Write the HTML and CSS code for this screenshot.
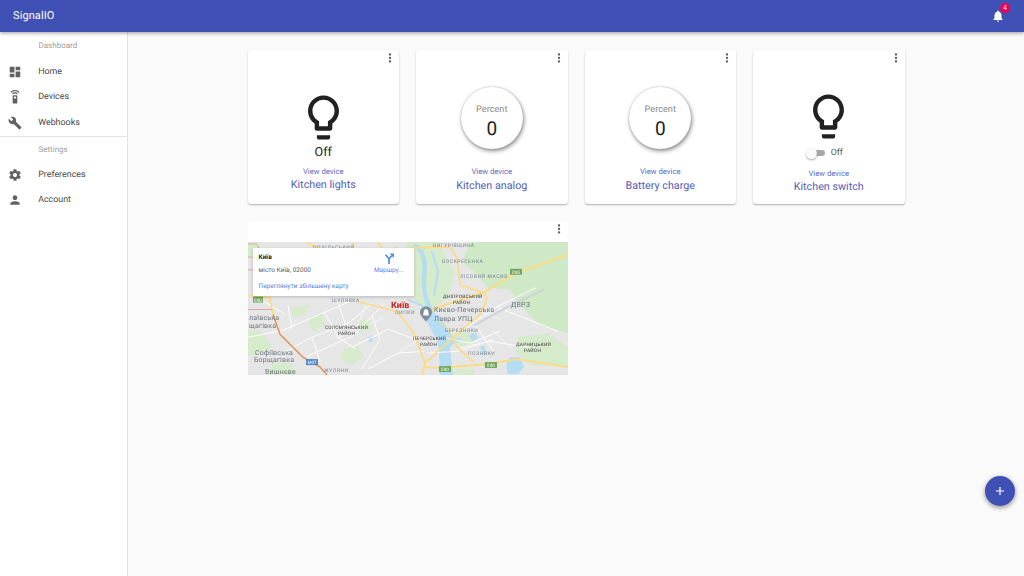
FILE: index.html
```html
<!DOCTYPE html>
<html lang="uk">
<head>
<meta charset="utf-8">
<title>SignalIO</title>
<link rel="stylesheet" href="styles.css">
</head>
<body>
<svg class="defs" aria-hidden="true">
  <symbol id="i-more" viewBox="0 0 24 24"><path d="M12 8c1.1 0 2-.9 2-2s-.9-2-2-2-2 .9-2 2 .9 2 2 2zm0 2c-1.1 0-2 .9-2 2s.9 2 2 2 2-.9 2-2-.9-2-2-2zm0 6c-1.1 0-2 .9-2 2s.9 2 2 2 2-.9 2-2-.9-2-2-2z"/></symbol>
  <symbol id="i-bulb" viewBox="0 0 24 24"><path d="M9 21c0 .55.45 1 1 1h4c.55 0 1-.45 1-1v-1H9v1zm3-19C8.14 2 5 5.14 5 9c0 2.38 1.19 4.47 3 5.74V17c0 .55.45 1 1 1h6c.55 0 1-.45 1-1v-2.26c1.81-1.27 3-3.36 3-5.74 0-3.86-3.14-7-7-7zm2.85 11.1l-.85.6V16h-4v-2.3l-.85-.6C7.8 12.16 7 10.63 7 9c0-2.76 2.24-5 5-5s5 2.24 5 5c0 1.63-.8 3.16-2.15 4.1z"/></symbol>
</svg>

<header class="appbar">
  <span class="brand">SignalIO</span>
  <button class="bell" type="button">
    <svg class="bell-icon" viewBox="0 0 24 24"><path d="M12 22c1.1 0 2-.9 2-2h-4c0 1.1.89 2 2 2zm6-6v-5c0-3.07-1.64-5.64-4.5-6.32V4c0-.83-.67-1.5-1.5-1.5s-1.5.67-1.5 1.5v.68C7.63 5.36 6 7.92 6 11v5l-2 2v1h16v-1l-2-2z"/></svg>
    <span class="badge">4</span>
  </button>
</header>

<div class="shell">
  <nav class="sidebar">
    <div class="nav-label">Dashboard</div>
    <a class="nav-item"><svg class="nav-icon" viewBox="0 0 24 24"><path d="M3 13h8V3H3v10zm0 8h8v-6H3v6zm10 0h8V11h-8v10zm0-18v6h8V3h-8z"/></svg>Home</a>
    <a class="nav-item"><svg class="nav-icon" viewBox="0 0 24 24"><path d="M15 9H9c-.55 0-1 .45-1 1v12c0 .55.45 1 1 1h6c.55 0 1-.45 1-1V10c0-.55-.45-1-1-1zm-3 6c-1.1 0-2-.9-2-2s.9-2 2-2 2 .9 2 2-.9 2-2 2zM7.05 6.05l1.41 1.41C9.37 6.56 10.62 6 12 6s2.63.56 3.54 1.46l1.41-1.41C15.68 4.78 13.93 4 12 4s-3.68.78-4.95 2.05zM12 0C8.96 0 6.21 1.23 4.22 3.22l1.41 1.41C7.26 3.01 9.51 2 12 2s4.74 1.01 6.36 2.64l1.41-1.41C17.79 1.23 15.04 0 12 0z"/></svg>Devices</a>
    <a class="nav-item"><svg class="nav-icon" viewBox="0 0 24 24"><path d="M22.7 19l-9.1-9.1c.9-2.3.4-5-1.5-6.9-2-2-5-2.4-7.4-1.3L9 6 6 9 1.6 4.7C.4 7.1.9 10.1 2.9 12.1c1.9 1.9 4.6 2.4 6.9 1.5l9.1 9.1c.4.4 1 .4 1.4 0l2.3-2.3c.5-.4.5-1.1.1-1.4z"/></svg>Webhooks</a>
    <div class="nav-divider"></div>
    <div class="nav-label nav-label-tight">Settings</div>
    <a class="nav-item"><svg class="nav-icon" viewBox="0 0 24 24"><path d="M19.43 12.98c.04-.32.07-.64.07-.98s-.03-.66-.07-.98l2.11-1.65c.19-.15.24-.42.12-.64l-2-3.46c-.12-.22-.39-.3-.61-.22l-2.49 1c-.52-.4-1.08-.73-1.69-.98l-.38-2.65C14.46 2.18 14.25 2 14 2h-4c-.25 0-.46.18-.49.42l-.38 2.65c-.61.25-1.17.59-1.69.98l-2.49-1c-.23-.09-.49 0-.61.22l-2 3.46c-.13.22-.07.49.12.64l2.11 1.65c-.04.32-.07.65-.07.98s.03.66.07.98l-2.11 1.65c-.19.15-.24.42-.12.64l2 3.46c.12.22.39.3.61.22l2.49-1c.52.4 1.08.73 1.69.98l.38 2.65c.03.24.24.42.49.42h4c.25 0 .46-.18.49-.42l.38-2.65c.61-.25 1.17-.59 1.69-.98l2.49 1c.23.09.49 0 .61-.22l2-3.46c.12-.22.07-.49-.12-.64l-2.11-1.65zM12 15.5c-1.93 0-3.5-1.57-3.5-3.5s1.57-3.5 3.5-3.5 3.5 1.57 3.5 3.5-1.57 3.5-3.5 3.5z"/></svg>Preferences</a>
    <a class="nav-item"><svg class="nav-icon" viewBox="0 0 24 24"><path d="M12 12c2.21 0 4-1.79 4-4s-1.79-4-4-4-4 1.79-4 4 1.79 4 4 4zm0 2c-2.67 0-8 1.34-8 4v2h16v-2c0-2.66-5.33-4-8-4z"/></svg>Account</a>
  </nav>

  <main class="main">
    <div class="grid">
      <article class="card">
        <svg class="more"><use href="#i-more"/></svg>
        <svg class="bulb"><use href="#i-bulb"/></svg>
        <div class="state">Off</div>
        <a class="view">View device</a>
        <a class="name">Kitchen lights</a>
      </article>

      <article class="card">
        <svg class="more"><use href="#i-more"/></svg>
        <div class="gauge"><span class="gauge-unit">Percent</span><span class="gauge-value">0</span></div>
        <a class="view">View device</a>
        <a class="name name-b">Kitchen analog</a>
      </article>

      <article class="card">
        <svg class="more"><use href="#i-more"/></svg>
        <div class="gauge"><span class="gauge-unit">Percent</span><span class="gauge-value">0</span></div>
        <a class="view">View device</a>
        <a class="name name-b">Battery charge</a>
      </article>

      <article class="card card-switch">
        <svg class="more"><use href="#i-more"/></svg>
        <svg class="bulb"><use href="#i-bulb"/></svg>
        <div class="switch-row"><span class="switch"><span class="thumb"></span></span><span class="switch-label">Off</span></div>
        <a class="view">View device</a>
        <a class="name">Kitchen switch</a>
      </article>

      <article class="card card-map">
        <svg class="more"><use href="#i-more"/></svg>
        <div class="map">
          <svg class="map-art" viewBox="0 0 320 134" preserveAspectRatio="none">
            <rect width="320" height="134" fill="#e6e6e6"/>
            <path fill="#cfe8c6" d="M222 0H320V92L292 84 270 62 262 48 240 46 226 30 214 20Z"/>
            <path fill="#d5ebcb" d="M270 96l30-4 20 14v20l-38-2-14-14zM0 0H12V12L0 16zM160 0h30l16 30-6 26-20 14-14-12-12-28zM205 92l16-2 6 10-14 6zM226 128h-18l-6 6h24zM96 108l14-3 6 10-12 10-12-8zM60 76l14-4 4 12-14 6zM110 78l10 0 3 10-12 3zM44 66l18-2-6 9-12 2zM0 90h14l10 16-18 8H0zM24 122h18l6 12H20z"/>
            <g fill="none" stroke="#b4dcf3" stroke-linecap="round">
              <path stroke-width="4.500" d="M168 4C176 10 178 20 176 35 175 50 178 62 188 78"/>
              <path stroke-width="2" d="M160 58 178 66 188 80M184 10 190 30 186 54"/>
            </g>
            <path fill="#b4dcf3" d="M183 72l8 2 8 12 6 10 10 2-10 5-3 3 3 28h-13l-1-26-2-10-5-8-5-10zM232 105l4-1 3 9-4 2zM262 116h10l4 10-6 7h-10l-2-8zM221 94l6-3 4 6-7 3zM120 96l4-1 1 5-4 1z"/>
            <g fill="none" stroke="#fff" stroke-width="1" stroke-opacity=".9">
              <path d="M32 90 102 60M38 110l26-14 36-14 24-20M64 96l8 24M76 70l14 26 18 12M58 116l48-22 30-32M104 106l36-18 28 10M124 74l8 24-18 30M86 50l12 34M40 64l4 24M16 60l20 12M0 96l30-6M204 96l44-30 40-20M196 96l26 6 30-12M250 66l60 24M226 82l22 32M180 112l30-2 36-12M240 100l40 6M120 128l30-16 26-2"/>
              <path stroke-width=".6" d="M118 64l-10 24-20 10M136 76l-24 12M48 78l-8 12M168 100l-16 10M208 108l24-6M232 70l20 8M244 88l18 18M216 50l-16 12"/>
            </g>
            <path fill="none" stroke="#cdd3da" stroke-width="2" d="M226 84l40-22 30-14"/>
            <g fill="none" stroke="#fbdc84" stroke-width="1.700" stroke-linecap="round" stroke-linejoin="round">
              <path stroke-width="2" d="M320 13 269 31 235 51 189 66 178 72"/>
              <path stroke-width="2" d="M174 134l2-8 16 1 47-4 30-5 51 8"/>
              <path d="M109 60 149 70 165 90 177 122 174 134"/>
              <path d="M165 6 202 5 209 16 212 43 235 51 239 56 232 73 205 96 209 106 225 120M177 122 205 96"/>
              <path d="M22 56 25 73M0 54 22 56M130 0l6 8M58 0l12 6M106 0l-2 6"/>
              <path stroke-width="1.200" d="M150 5l-20 5M205 96l-6-10-8-6"/>
            </g>
            <path fill="none" stroke="#e58f56" stroke-width="1.400" d="M25 73l7 20 23 23 17 10 7 8"/>
            <path fill="none" stroke="#e8a6a0" stroke-width="1" d="M0 68h24M0 2l8 0 6 8-4 6-10-1M0 28l6 0"/>
            <g class="label">
              <text x="65" y="7">ПОДІЛЬСЬКИЙ</text>
              <text x="185" y="5">ВИГУРІВЩИНА</text>
              <text x="194" y="21">ВОСКРЕСЕНКА</text>
              <text x="212" y="36">ЛІСОВИЙ МАСИВ</text>
              <text x="84" y="60">ШУЛЯВКА</text>
              <text x="197" y="91">БЕРЕЗНЯКИ</text>
              <text x="220" y="114">ПОЗНЯКИ</text>
              <text x="147" y="73">ЛИПКИ</text>
              <text x="76" y="131">ЖУЛЯНИ</text>
            </g>
            <g class="label-dark">
              <text x="77" y="88">СОЛОМ'ЯНСЬКИЙ</text><text x="90" y="94">РАЙОН</text>
              <text x="195" y="56">ДНІПРОВСЬКИЙ</text><text x="205" y="62">РАЙОН</text>
              <text x="165" y="99">ПЕЧЕРСЬКИЙ</text><text x="172" y="105">РАЙОН</text>
              <text x="268" y="105">ДАРНИЦЬКИЙ</text><text x="276" y="111">РАЙОН</text>
            </g>
            <g class="label-large">
              <text x="263" y="65">ДВРЗ</text>
              <text x="186" y="71">Києво-Печерська</text>
              <text x="186" y="80">Лавра УПЦ</text>
              <text x="7" y="114">Софіївська</text>
              <text x="6" y="121">Борщагівка</text>
              <text x="1" y="79">лаївська</text>
              <text x="1" y="87">щагівка</text>
              <text x="17" y="133">Вишнєве</text>
            </g>
            <text class="label-city" x="143" y="66">Київ</text>
            <path fill="#7a8b99" d="M178 65c-3.300 0-6 2.600-6 5.800 0 3.900 6 9.200 6 9.200s6-5.300 6-9.200c0-3.200-2.700-5.800-6-5.800z"/>
            <path fill="#fff" d="M175 74l1-5 2-2 2 2 1 5z"/>
            <g class="shield">
              <rect x="262" y="27" width="12" height="6" fill="#6fa85e"/><text x="268" y="32">E95</text>
              <rect x="191" y="125" width="12" height="6" fill="#6fa85e"/><text x="197" y="130">E40</text>
              <rect x="237" y="121" width="12" height="6" fill="#6fa85e"/><text x="243" y="126">E40</text>
              <rect x="58" y="118" width="12" height="6" fill="#4f87c9"/><text x="64" y="123">М07</text>
              <rect x="5" y="55" width="10" height="6" fill="#6fa85e"/><text x="10" y="60">E40</text>
            </g>
          </svg>
          <div class="popup">
            <div class="popup-main">
              <div class="popup-text">
                <div class="popup-title">Київ</div>
                <div class="popup-sub">місто Київ, 02000</div>
              </div>
              <div class="popup-route">
                <svg class="route-icon" viewBox="0 0 24 24"><path class="route-stroke" d="M5 3.500l7 8V22M12 11.500l6-6"/><path d="M13 1h9v9z"/></svg>
                <span>Маршру...</span>
              </div>
            </div>
            <a class="popup-link">Переглянути збільшену карту</a>
          </div>
        </div>
      </article>
    </div>
  </main>
</div>

<button class="fab" type="button">
  <svg class="fab-icon" viewBox="0 0 24 24"><path d="M19 13h-6v6h-2v-6H5v-2h6V5h2v6h6v2z"/></svg>
</button>
</body>
</html>
```
FILE: styles.css
```css
* { box-sizing: border-box; }
html, body { height: 100%; }
body {
  margin: 0;
  height: 576px;
  overflow: hidden;
  display: flex;
  flex-direction: column;
  font-family: Roboto, "Liberation Sans", sans-serif;
  text-rendering: geometricPrecision;
  background: #fafafa;
  color: #212121;
}
.defs { display: none; }

.appbar {
  position: relative;
  z-index: 2;
  flex: 0 0 32px;
  display: flex;
  align-items: center;
  justify-content: space-between;
  padding: 0 19px 2px 13px;
  background: #3f51b5;
  color: #fff;
  box-shadow: 0 1px 4px rgba(0,0,0,.4);
}
.brand { font-size: 11px; letter-spacing: .1px; }
.bell {
  position: relative;
  padding: 0;
  border: 0;
  background: none;
  width: 14px;
  height: 14px;
  margin-top: 2px;
}
.bell-icon { display: block; width: 14px; height: 14px; fill: #fff; }
.badge {
  position: absolute;
  top: -6px;
  right: -5px;
  width: 10px;
  height: 10px;
  border-radius: 50%;
  background: #f50057;
  color: #fff;
  font-size: 6.500px;
  line-height: 10px;
  text-align: center;
}

.shell { flex: 1; display: flex; min-height: 0; }
.sidebar {
  flex: 0 0 128px;
  padding-top: 1px;
  background: #fff;
  border-right: 1px solid #e4e4e4;
}
.nav-label {
  height: 26px;
  padding-left: 38.500px;
  font-size: 8px;
  line-height: 26px;
  color: #9e9e9e;
}
.nav-label-tight { height: 25px; line-height: 25px; }
.nav-item {
  height: 25.600px;
  display: flex;
  align-items: center;
  font-size: 8.900px;
  color: #4a4a4a;
}
.nav-icon {
  flex: 0 0 14px;
  width: 14px;
  height: 14px;
  margin: 0 16.200px 0 8px;
  fill: #616161;
}
.nav-divider { height: 1px; background: #e4e4e4; }

.main { flex: 1; padding-top: 18px; }
.grid {
  width: 657px;
  margin: 0 auto;
  display: grid;
  grid-template-columns: repeat(4, 1fr);
  grid-auto-rows: 154px;
  gap: 17px;
}
.card {
  position: relative;
  display: flex;
  flex-direction: column;
  align-items: center;
  justify-content: flex-end;
  padding-bottom: 12px;
  background: #fff;
  border-radius: 3px;
  box-shadow: 0 1px 2px rgba(0,0,0,.22), 0 1px 1px rgba(0,0,0,.1);
}
.more {
  position: absolute;
  top: 1px;
  right: 2px;
  width: 14px;
  height: 14px;
  fill: #616161;
  z-index: 1;
}
.bulb { width: 53px; height: 53px; fill: #212121; }
.state { margin: 1px 0 5px; font-size: 12.500px; line-height: 16px; }
.view { font-size: 7.700px; line-height: 11px; color: #5c6bc0; }
.name { margin-top: 1px; font-size: 10.750px; line-height: 14px; color: #5460b8; }
.name-b { margin: 2.500px 0 -1px; }

.gauge {
  width: 62px;
  height: 62px;
  margin-bottom: 17px;
  display: flex;
  flex-direction: column;
  align-items: center;
  border-radius: 50%;
  background: #fff;
  box-shadow: 1px 2px 4px rgba(0,0,0,.45), 0 0 2px rgba(0,0,0,.2);
}
.gauge-unit { margin-top: 17px; font-size: 9.200px; line-height: 12px; color: #8a8a8a; }
.gauge-value { margin-top: 2px; font-size: 19px; line-height: 22px; }

.card-switch { padding-bottom: 10px; }
.card-switch .bulb { margin-bottom: 4.500px; }
.switch-row { display: flex; align-items: center; height: 12px; margin-bottom: 9px; padding-right: 6px; }
.switch { position: relative; width: 16px; height: 6px; margin-right: 6px; border-radius: 3px; background: #a8a8a8; }
.thumb {
  position: absolute;
  left: -3px;
  top: -2.500px;
  width: 11px;
  height: 11px;
  border-radius: 50%;
  background: #fafafa;
  box-shadow: 0 1px 2px rgba(0,0,0,.35);
}
.switch-label { font-size: 8.800px; color: #555; }

.card-map {
  grid-column: span 2;
  padding: 21px 0 0;
  overflow: hidden;
  justify-content: flex-start;
  align-items: stretch;
  border-radius: 3px 3px 0 0;
  box-shadow: none;
}
.map { position: relative; height: 134px; overflow: hidden; }
.map-art { display: block; width: 100%; height: 100%; filter: blur(.45px); }
.label text { font: 5px Roboto, sans-serif; letter-spacing: .55px; fill: #7a8492; }
.label-dark text { font: 500 4.800px Roboto, sans-serif; letter-spacing: .2px; fill: #5c5c5c; }
.label-large text { font: 7px Roboto, sans-serif; letter-spacing: .2px; fill: #6a747c; }
.label-city { font: 700 9px Roboto, sans-serif; fill: #c5221f; }
.shield text { font: 4.500px Roboto, sans-serif; fill: #fff; text-anchor: middle; }

.popup {
  position: absolute;
  left: 5px;
  top: 6px;
  width: 161px;
  height: 48px;
  padding: 5px 6px 0;
  background: #fff;
  box-shadow: 0 1px 3px rgba(0,0,0,.2);
  display: flex;
  flex-direction: column;
  justify-content: space-between;
  font-size: 6.500px;
}
.popup-main { display: flex; justify-content: space-between; }
.popup-title { font-weight: 700; line-height: 9px; color: #222; }
.popup-sub { margin-top: 3.500px; line-height: 9px; color: #5b5b5b; }
.popup-route { display: flex; flex-direction: column; align-items: center; margin-right: 4px; color: #4f86e8; font-size: 6.500px; line-height: 8px; }
.route-icon { width: 12px; height: 12px; fill: #4f8fe0; margin-bottom: 1px; }
.route-stroke { fill: none; stroke: #4f8fe0; stroke-width: 3.500; }
.popup-link { margin-bottom: 5px; line-height: 9px; color: #4f7fe0; }

.fab {
  position: absolute;
  left: 985px;
  top: 476px;
  width: 30px;
  height: 30px;
  padding: 0;
  border: 0;
  border-radius: 50%;
  background: #3f51b5;
  display: flex;
  align-items: center;
  justify-content: center;
  box-shadow: 0 2px 4px rgba(0,0,0,.3), 0 1px 6px rgba(0,0,0,.15);
}
.fab-icon { width: 14px; height: 14px; fill: #fff; }
```
